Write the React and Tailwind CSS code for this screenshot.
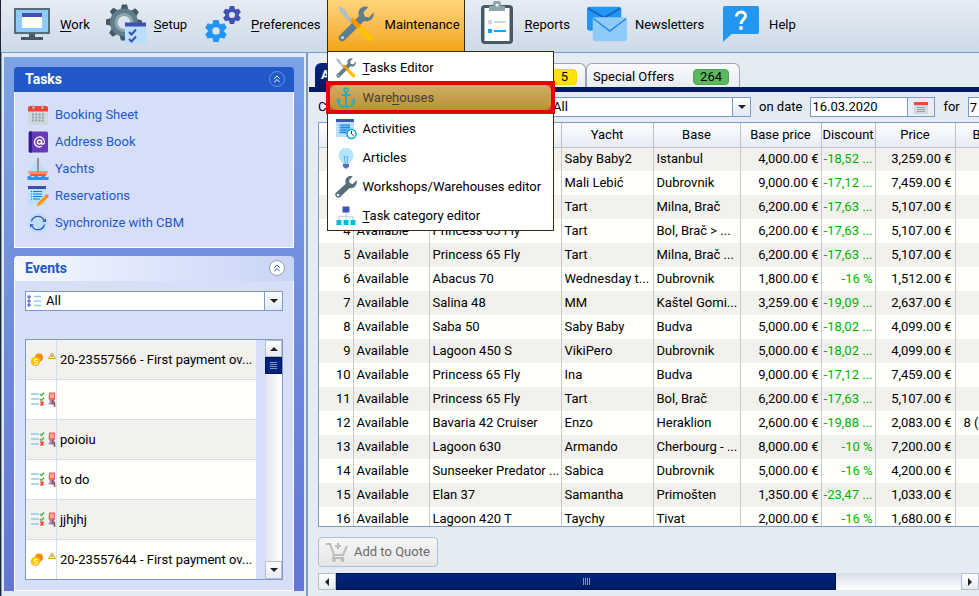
import { useState } from "react";
import { ChevronsUp } from "lucide-react";

const tasks = [
  { label: "Booking Sheet", icon: CalendarIcon },
  { label: "Address Book", icon: AddressBookIcon },
  { label: "Yachts", icon: BoatIcon },
  { label: "Reservations", icon: ReservationIcon },
  { label: "Synchronize with CBM", icon: SyncIcon },
];

const events = [
  { type: "payment", text: "20-23557566 - First payment ov..." },
  { type: "todo", text: "" },
  { type: "todo", text: "poioiu" },
  { type: "todo", text: "to do" },
  { type: "todo", text: "jjhjhj" },
  { type: "payment", text: "20-23557644 - First payment ov..." },
];

const offers = [
  ["", "Saby Baby2", "Istanbul", "4,000.00 €", "-18,52 ...", "3,259.00 €"],
  ["", "Mali Lebić", "Dubrovnik", "9,000.00 €", "-17,12 ...", "7,459.00 €"],
  ["", "Tart", "Milna, Brač", "6,200.00 €", "-17,63 ...", "5,107.00 €"],
  ["Princess 65 Fly", "Tart", "Bol, Brač > ...", "6,200.00 €", "-17,63 ...", "5,107.00 €"],
  ["Princess 65 Fly", "Tart", "Milna, Brač ...", "6,200.00 €", "-17,63 ...", "5,107.00 €"],
  ["Abacus 70", "Wednesday t...", "Dubrovnik", "1,800.00 €", "-16 %", "1,512.00 €"],
  ["Salina 48", "MM", "Kaštel Gomi...", "3,259.00 €", "-19,09 ...", "2,637.00 €"],
  ["Saba 50", "Saby Baby", "Budva", "5,000.00 €", "-18,02 ...", "4,099.00 €"],
  ["Lagoon 450 S", "VikiPero", "Dubrovnik", "5,000.00 €", "-18,02 ...", "4,099.00 €"],
  ["Princess 65 Fly", "Ina", "Budva", "9,000.00 €", "-17,12 ...", "7,459.00 €"],
  ["Princess 65 Fly", "Tart", "Bol, Brač", "6,200.00 €", "-17,63 ...", "5,107.00 €"],
  ["Bavaria 42 Cruiser", "Enzo", "Heraklion", "2,600.00 €", "-19,88 ...", "2,083.00 €", "8 ("],
  ["Lagoon 630", "Armando", "Cherbourg - ...", "8,000.00 €", "-10 %", "7,200.00 €"],
  ["Sunseeker Predator ...", "Sabica", "Dubrovnik", "5,000.00 €", "-16 %", "4,200.00 €"],
  ["Elan 37", "Samantha", "Primošten", "1,350.00 €", "-23,47 ...", "1,033.00 €"],
  ["Lagoon 420 T", "Taychy", "Tivat", "2,000.00 €", "-16 %", "1,680.00 €"],
];

function WorkIcon() {
  return (
    <svg viewBox="0 0 40 36" className="h-9 w-10">
      <path d="M2 2h36v26H2z" fill="#546e7a" />
      <path d="M4 4h32v22H4z" fill="#90caf9" />
      <path d="M17 28h6v4h-6zM9 31h22v3H9z" fill="#455a64" />
      <path d="M10 7h20v15H10z" fill="#fff" />
      <path d="M10 7h20v4H10z" fill="#3f51b5" />
    </svg>
  );
}

function SetupIcon() {
  return (
    <svg viewBox="0 0 40 40" className="size-10">
      <g fill="#455a64">
        {[0, 45, 90, 135, 180, 225, 270, 315].map((deg) => (
          <path key={deg} d="M14.500 6 16 0.500h5L22.500 6z" transform={`rotate(${deg} 18 18.500)`} />
        ))}
      </g>
      <circle cx="18" cy="18.500" r="10.500" fill="none" stroke="#607d8b" strokeWidth="7" />
      <circle cx="18" cy="18.500" r="8" fill="none" stroke="#90a4ae" strokeWidth="3" />
      <path d="M19 19h21v21H19z" fill="#bbdefb" />
      <path d="M19 18.500h21v4H19z" fill="#3f51b5" />
      <path d="m23 28 2.500 2.500 4.500-5M23 35l2.500 2.500 4.500-5" fill="none" stroke="#3f51b5" strokeWidth="2" />
    </svg>
  );
}

function SmallGear({ cx, cy, r, color }) {
  return (
    <g transform={`translate(${cx} ${cy}) scale(${r / 11})`}>
      {[0, 60, 120, 180, 240, 300].map((deg) => (
        <path key={deg} d="M-3.800-6-2.600-11h5.200L3.800-6z" fill={color} transform={`rotate(${deg})`} />
      ))}
      <circle r="6" fill="none" stroke={color} strokeWidth="4.500" />
    </g>
  );
}

function PreferencesIcon() {
  return (
    <svg viewBox="0 0 40 40" className="size-10">
      <SmallGear cx={29} cy={11} r={9} color="#3f51b5" />
      <SmallGear cx={13} cy={27} r={11} color="#2196f3" />
    </svg>
  );
}

function ToolsIcon({ className }) {
  return (
    <svg viewBox="0 0 36 36" className={className}>
      <path d="m0.500 1.500 1-1 5 2.500 2.500 5L20 19l-3 3L6 10 2.500 7z" fill="#b0bec5" />
      <path d="m17 21.500 4-4L34 29.500c3 3-1.500 7.500-4.500 4.500z" fill="#ffc107" />
      <path
        d="M35.500 6.500 31 11.500l-4.500-1-1-4.500L30.500 1c-4-1.500-8.500 0-9.700 4-.7 2-.3 3.500.2 5L1.500 29.500c-3 3 2 8 5 5L26 15c5 2 11-2.500 9.500-8.500z"
        fill="#607d8b"
      />
      <path d="m12 14.500 3-3 8 8-3.500 3.500z" fill="#ff9800" />
      <circle cx="4.500" cy="31.500" r="1.500" fill="#cfd8dc" />
    </svg>
  );
}

function ReportsIcon() {
  return (
    <svg viewBox="0 0 40 46" className="h-[46px] w-10">
      <path d="M8 4h24a4 4 0 0 1 4 4v31a4 4 0 0 1-4 4H8a4 4 0 0 1-4-4V8a4 4 0 0 1 4-4z" fill="#455a64" />
      <path d="M7.500 7h25v33h-25z" fill="#fff" />
      <path d="M12 5h4.500a4 4 0 1 1 7 0H28v5H12z" fill="#90a4ae" />
      <circle cx="20" cy="4" r="1.500" fill="#fff" />
      <path d="M11 19h4v4h-4zM17 20h12v2H17z" fill="#cfd8dc" />
      <path d="M11 28h4v4h-4zM17 29h12v2H17z" fill="#03a9f4" />
    </svg>
  );
}

function NewslettersIcon() {
  return (
    <svg viewBox="0 0 42 36" className="h-9 w-[42px]">
      <rect width="36" height="25" rx="2.500" fill="#2196f3" />
      <path d="m1 1.500 17 10 17-10" fill="none" stroke="#1565c0" strokeWidth="2" />
      <rect x="6" y="11" width="36" height="25" rx="2.500" fill="#90caf9" />
      <path d="m7 12.500 17 13 17-13" fill="none" stroke="#1e88e5" strokeWidth="1.500" />
    </svg>
  );
}

function HelpIcon() {
  return (
    <svg viewBox="0 0 40 38" className="h-[38px] w-10">
      <path d="M4 1h32a2 2 0 0 1 2 2v24a2 2 0 0 1-2 2H10.500L2 37V3a2 2 0 0 1 2-2z" fill="#2196f3" />
      <path d="M15.500 11.500c0-6 9-6 9-.7 0 3.700-4.500 4-4.500 8.200" fill="none" stroke="#fff" strokeWidth="3" />
      <circle cx="20" cy="23" r="2" fill="#fff" />
    </svg>
  );
}

function AnchorIcon() {
  return (
    <svg viewBox="0 0 20 22" className="h-[22px] w-5" fill="none" stroke="#2fa9bd" strokeWidth="2">
      <circle cx="10" cy="3" r="2" strokeWidth="1.500" />
      <path d="M10 5v15M5.500 8h9" />
      <path d="M2 13c0 5 4 7 8 7s8-2 8-7" />
      <path d="m0 15 2-4 3.500 3zM20 15l-2-4-3.500 3z" fill="#2fa9bd" stroke="none" />
    </svg>
  );
}

function ActivitiesIcon() {
  return (
    <svg viewBox="0 0 22 22" className="size-[22px]">
      <path d="M1 2h18v17H1z" fill="#bbdefb" />
      <path d="M1 1h18v3H1z" fill="#3f51b5" />
      <path d="M5 6.500h10v9H5z" fill="#64b5f6" />
      <path d="M4 7h1M4 9.500h1M4 12h1M4 14.500h1M6 7h9M6 9.500h9M6 12h6M6 14.500h5" stroke="#1e88e5" />
      <circle cx="16.500" cy="16" r="4.500" fill="#fff" stroke="#00acc1" strokeWidth="1.500" />
      <path d="M16.500 13v3l2 1.500" fill="none" stroke="#263238" />
    </svg>
  );
}

function BulbIcon() {
  return (
    <svg viewBox="0 0 22 22" className="size-[22px]">
      <path d="M11 1a7.500 7.500 0 0 1 5 13c-1 1-1.200 2-1.500 3h-7c-.3-1-.5-2-1.500-3a7.500 7.500 0 0 1 5-13z" fill="#b3e5fc" />
      <path d="m10 17-.8-8 1.800 1.500L12.800 9l-.8 8" fill="none" stroke="#4fa3e0" strokeWidth="0.800" />
      <path d="M8 17h6v2.500l-2 2h-2l-2-2z" fill="#5c6bc0" />
    </svg>
  );
}

function WrenchIcon() {
  return (
    <svg viewBox="0 0 36 36" className="size-[22px]">
      <path
        d="M35.500 7 29 13l-5-1.500L23 7l6-6.500c-6-1.500-12 2-12 8 0 1.500.2 2.500.6 4L1.500 27.500c-4 4 3 11 7 7L24 19.500c7 2 13-5 11.500-12.500z"
        fill="#546e7a"
      />
      <circle cx="5" cy="31" r="2" fill="#fff" />
    </svg>
  );
}

function TreeIcon() {
  return (
    <svg viewBox="0 0 22 22" className="size-[22px]">
      <path d="M11 7v9M4 16v-4.500h14V16" fill="none" stroke="#cfd8dc" strokeWidth="1.500" />
      <path d="M7.500 1.500h7v6h-7z" fill="#3f51b5" />
      <path d="M1.500 15h5v5h-5zM8.500 15h5v5h-5zM15.500 15h5v5h-5z" fill="#00bcd4" />
    </svg>
  );
}

function CalendarIcon() {
  return (
    <svg viewBox="0 0 22 22" className="size-[22px]">
      <path d="M1 7h20v12a2 2 0 0 1-2 2H3a2 2 0 0 1-2-2z" fill="#cfd8dc" />
      <path d="M1 7.500V4a2 2 0 0 1 2-2h16a2 2 0 0 1 2 2v3.500z" fill="#f44336" />
      <path d="M6.500 1v4M15.500 1v4" stroke="#b0bec5" strokeWidth="2" />
      <path d="M5 10.500h12M5 13.500h12M5 16.500h12" stroke="#90a4ae" strokeWidth="2" strokeDasharray="2 1.300" />
    </svg>
  );
}

function AddressBookIcon() {
  return (
    <svg viewBox="0 0 22 22" className="size-[22px]">
      <rect x="1.500" y="0.500" width="19.500" height="21" rx="1.500" fill="#673ab7" />
      <path d="M2 .5h3v21H2z" fill="#311b92" />
      <circle cx="12.500" cy="11" r="2" fill="none" stroke="#fff" strokeWidth="1.500" />
      <path d="M14.500 9v3c0 2 3 1.500 3-1a5 5 0 1 0-2.500 4.300" fill="none" stroke="#fff" strokeWidth="1.300" />
    </svg>
  );
}

function BoatIcon() {
  return (
    <svg viewBox="0 0 22 22" className="size-[22px]">
      <path d="M10 1 2 13h8zM12 2l7 11h-7z" fill="#bbdefb" />
      <path d="M10.300 0h1.400v14h-1.400z" fill="#8d6e63" />
      <path d="M1 13.500h20L18.500 18h-15z" fill="#ff5722" />
      <path d="M2 15h18" stroke="#ffccbc" />
      <path d="M.5 18.500q1.750-1.500 3.500 0t3.500 0 3.500 0 3.500 0 3.500 0 3.500 0V22H.5z" fill="#2196f3" />
    </svg>
  );
}

function ReservationIcon() {
  return (
    <svg viewBox="0 0 22 22" className="size-[22px]">
      <path d="M1 1h18v19H1z" fill="#bbdefb" />
      <path d="M1 1h18v3H1z" fill="#3f51b5" />
      <path d="M4 6.500h1M4 9h1M4 11.500h1M4 14h1M6 6.500h9M6 9h9M6 11.500h9M6 14h7" stroke="#1976d2" strokeWidth="1.200" />
      <path d="m9.500 21.500 1.500-4 7-7 2.500 2.500-7 7z" fill="#ff9800" />
      <path d="m18 10.500 1-1c1-1 3.500 1.500 2.500 2.500l-1 1z" fill="#e57373" />
    </svg>
  );
}

function SyncIcon() {
  return (
    <svg viewBox="0 0 22 22" className="size-[22px]">
      <circle cx="11" cy="11" r="10" fill="#bbdefb" />
      <path d="M4.500 9.500a6.700 6.700 0 0 1 12.500-1.500M17.500 12.500A6.700 6.700 0 0 1 5 14" fill="none" stroke="#3f51b5" strokeWidth="1.200" />
      <path d="m15 9.500 4 .5V6.500zM7 12.500 3 12v3.500z" fill="#3f51b5" />
    </svg>
  );
}

function CoinsIcon() {
  return (
    <svg viewBox="0 0 26 16" className="h-4 w-[26px] shrink-0">
      <circle cx="9" cy="5.500" r="4" fill="#fb8c00" />
      <circle cx="5.500" cy="9.500" r="4.700" fill="#ffc107" />
      <path d="M7.500 7.500H4.500v2h2c1.300 0 1.300 2.300 0 2.300H4" fill="none" stroke="#fff" />
      <path d="m22 1 3.500 5.500h-7z" fill="#fff59d" stroke="#d9a520" />
      <path d="M22 3v2" stroke="#8d6e63" />
    </svg>
  );
}

function TodoIcon() {
  return (
    <svg viewBox="0 0 26 16" className="h-4 w-[26px] shrink-0" fill="none">
      <path d="M1 2h8M1 7h8M1 12h8" stroke="#90caf9" strokeWidth="1.500" />
      <path d="m10 2 1.500 1.500L14 .5M10 7l1.500 1.500L14 5.500" stroke="#4caf50" strokeWidth="1.400" />
      <path d="m10.500 9.500 3 4M13.500 9.500l-3 4" stroke="#f44336" strokeWidth="1.400" />
      <path d="M19 .5h6v7l-2 2h-3l-1.500-3z" fill="#ef6c5a" />
      <path d="M21 2v4M23 2v4" stroke="#fff" strokeWidth="0.800" />
      <path d="m18 12 3-4 4 1v3l-3 1z" fill="#b388eb" />
      <path d="M22.500 8v3h2v4" stroke="#8d5a3a" strokeWidth="1.500" />
    </svg>
  );
}

function CartIcon() {
  return (
    <svg viewBox="0 0 22 20" className="h-5 w-[22px]" fill="none" stroke="#bdbdbd" strokeWidth="2">
      <path d="M0 2h4l4 11h9l4-9M8 13l-1 3h11M12 1v6M9 4h6" />
      <circle cx="8" cy="18" r="1" />
      <circle cx="16.500" cy="18" r="1" />
    </svg>
  );
}

function ListIcon() {
  return (
    <svg viewBox="0 0 14 12" className="h-3 w-3.5">
      <path d="M1 1h2v2H1zM1 5h2v2H1zM1 9h2v2H1z" fill="#fff" stroke="#3f51b5" />
      <path d="M7 1.500h7M7 6h7M7 10.500h7" stroke="#90caf9" strokeWidth="1.500" />
    </svg>
  );
}

function Arrow({ dir = "down" }) {
  const paths = { down: "M1 3h8L5 7z", up: "M1 7h8L5 3z", left: "M7 1v8L3 5z", right: "M3 1v8l4-4z" };
  return (
    <svg viewBox="0 0 10 10" className="size-2.5">
      <path d={paths[dir]} fill="#222" />
    </svg>
  );
}

function Mnemonic({ text, at = 0 }) {
  return (
    <span className="whitespace-nowrap">
      {text.slice(0, at)}
      <span className="underline underline-offset-2">{text[at]}</span>
      {text.slice(at + 1)}
    </span>
  );
}

function ToolbarButton({ icon, children }) {
  return (
    <button type="button" className="flex h-full items-center gap-2 px-2">
      <span className="flex w-10 shrink-0 justify-center">{icon}</span>
      <span className="pt-0.5">{children}</span>
    </button>
  );
}

function ComboBox({ label, icon, className, children }) {
  return (
    <div className={`relative h-5 border border-[#7a9bcb] bg-white ${className}`}>
      {icon && <span className="pointer-events-none absolute inset-y-0 left-px flex items-center">{icon}</span>}
      <select aria-label={label} className={`block h-full w-full appearance-none bg-transparent pr-5 outline-none ${icon ? "pl-5" : "pl-[3px]"}`}>
        {children}
      </select>
      <span className="pointer-events-none absolute inset-y-0 right-0 flex w-[18px] items-center justify-center border-l border-[#7a9bcb] bg-linear-to-b from-white to-[#e1e8f4]">
        <Arrow />
      </span>
    </div>
  );
}

function MenuItem({ icon, children }) {
  return (
    <button type="button" role="menuitem" className="flex h-[29px] w-full items-center gap-1 pl-[7px] text-left whitespace-nowrap">
      <span className="flex w-[22px] shrink-0 justify-center">{icon}</span>
      <span className="pl-0.5">{children}</span>
    </button>
  );
}

function MaintenanceMenu() {
  return (
    <div role="menu" className="absolute top-[51px] left-0 z-20 w-[227px] border border-[#3b2b0a] bg-white pt-px">
      <MenuItem icon={<ToolsIcon className="size-5" />}>
        <Mnemonic text="Tasks Editor" />
      </MenuItem>
      <div className="-mx-0.5 -mt-px border-4 border-[#e60008] bg-[#c04a4a]">
        <button
          type="button"
          role="menuitem"
          className="flex h-[25px] w-full items-center gap-1 rounded-md bg-linear-to-b from-[#cdaf68] to-[#c0902b] pl-[5px] text-left text-[#45402f]"
        >
          <span className="flex w-[22px] shrink-0 justify-center"><AnchorIcon /></span>
          <span className="pl-0.5"><Mnemonic text="Warehouses" at={4} /></span>
        </button>
      </div>
      <MenuItem icon={<ActivitiesIcon />}>Activities</MenuItem>
      <MenuItem icon={<BulbIcon />}>Articles</MenuItem>
      <MenuItem icon={<WrenchIcon />}>Workshops/Warehouses editor</MenuItem>
      <MenuItem icon={<TreeIcon />}>
        <Mnemonic text="Task category editor" />
      </MenuItem>
    </div>
  );
}

function Toolbar() {
  const [open, setOpen] = useState(true);

  return (
    <nav className="flex h-[53px] shrink-0 border-b border-[#7a9bcb] bg-linear-to-b from-[#e6ecf4] to-[#cddae8] pb-1 pl-[3px]">
      <ToolbarButton icon={<WorkIcon />}><Mnemonic text="Work" /></ToolbarButton>
      <ToolbarButton icon={<SetupIcon />}><Mnemonic text="Setup" /></ToolbarButton>
      <ToolbarButton icon={<PreferencesIcon />}><Mnemonic text="Preferences" /></ToolbarButton>
      <div className="relative -ml-0.5">
        <button
          type="button"
          aria-expanded={open}
          onClick={() => setOpen(!open)}
          className="flex h-[52px] items-center gap-2 border-x border-[#3b2b0a] bg-linear-to-b from-[#ffd478] to-[#f2a500] pr-1 pb-1 pl-2"
        >
          <span className="flex w-10 shrink-0 justify-center"><ToolsIcon className="size-9" /></span>
          <span className="pt-0.5 pl-px">Maintenance</span>
        </button>
        {open && <MaintenanceMenu />}
      </div>
      <div className="flex gap-px pl-1">
        <ToolbarButton icon={<ReportsIcon />}><Mnemonic text="Reports" /></ToolbarButton>
        <ToolbarButton icon={<NewslettersIcon />}>Newsletters</ToolbarButton>
        <ToolbarButton icon={<HelpIcon />}>Help</ToolbarButton>
      </div>
    </nav>
  );
}

function TasksPanel() {
  return (
    <section>
      <header className="flex h-[25px] items-center justify-between rounded-t bg-[#2159c9] pr-[9px] pb-0.5 pl-[11px] text-white">
        <h2 className="text-sm font-bold">Tasks</h2>
        <button type="button" aria-label="Collapse tasks" className="flex size-4 items-center justify-center rounded-full border border-[#5b94f0]">
          <ChevronsUp size={12} />
        </button>
      </header>
      <ul className="border border-t-0 border-white bg-[#d7dff8] px-3 pt-[9px] pb-[11px]">
        {tasks.map(({ label, icon: Icon }) => (
          <li key={label}>
            <a href="#" className="flex h-[27px] items-center gap-1.5 text-[#2159c9]">
              <Icon />
              {label}
            </a>
          </li>
        ))}
      </ul>
    </section>
  );
}

function EventsPanel() {
  return (
    <section className="mt-2 flex min-h-0 flex-1 flex-col">
      <header className="flex h-[25px] shrink-0 items-center justify-between rounded-t bg-linear-to-r from-[#f5f8fe] to-[#c8d4f7] pr-[9px] pb-0.5 pl-[11px]">
        <h2 className="text-sm font-bold text-[#2159c9]">Events</h2>
        <button type="button" aria-label="Collapse events" className="flex size-4 items-center justify-center rounded-full border border-[#9a9fb0] bg-white text-[#2159c9]">
          <ChevronsUp size={12} />
        </button>
      </header>
      <div className="flex min-h-0 flex-1 flex-col gap-7 border border-t-0 border-white bg-[#d7dff8] px-2.5 pt-2.5 pb-2.5">
        <ComboBox label="Event type" icon={<ListIcon />} className="shrink-0">
          <option>All</option>
        </ComboBox>
        <div className="flex min-h-0 flex-1 border border-[#7a9bcb]">
          <ul className="mr-[9px] min-w-0 flex-1 overflow-hidden">
            {events.map((event, i) => (
              <li key={i} className="flex h-10 border-b border-[#d3ddf6] odd:bg-[#f3f1ee] even:bg-[#fffffb]">
                <span className="flex w-[31px] shrink-0 items-center overflow-hidden border-r border-[#d3ddf6] pl-1">
                  {event.type === "payment" ? <CoinsIcon /> : <TodoIcon />}
                </span>
                <span className="flex items-center pl-[3px] whitespace-nowrap">{event.text}</span>
              </li>
            ))}
          </ul>
          <div className="flex w-[17px] shrink-0 flex-col bg-linear-to-r from-[#dfe4ee] to-white">
            <button type="button" aria-label="Scroll up" className="flex h-[17px] items-center justify-center border border-[#b8bfcc] bg-linear-to-b from-white to-[#e6ebf3]">
              <Arrow dir="up" />
            </button>
            <div className="flex h-[17px] flex-col items-center justify-center gap-px border border-[#001450] bg-[#00247d]">
              {[0, 1, 2, 3].map((n) => <i key={n} className="h-px w-[7px] bg-[#8093c4]" />)}
            </div>
            <button type="button" aria-label="Scroll down" className="mt-auto flex h-[18px] items-center justify-center border border-[#b8bfcc] bg-linear-to-b from-white to-[#e6ebf3]">
              <Arrow />
            </button>
          </div>
        </div>
      </div>
    </section>
  );
}

function Tabs() {
  return (
    <div className="ml-px flex h-[29px] shrink-0 border-b-[5px] border-[#001b62] pl-1.5">
      <button type="button" className="w-[120px] rounded-t-md bg-linear-to-b from-[#00267f] to-[#001b62] px-1.5 text-left font-bold text-white">
        Availability
      </button>
      <button type="button" className="flex w-[151px] items-center justify-between rounded-t-md border border-b-0 border-[#9fa3ab] bg-linear-to-b from-[#fafafc] to-[#e8ecf3] pt-0.5 pr-2 pl-1.5">
        Options
        <span className="rounded border border-[#f0d800] bg-[#ffe208] px-2 leading-3.5">5</span>
      </button>
      <button type="button" className="flex w-[154px] items-center justify-between rounded-t-md border border-b-0 border-[#9fa3ab] bg-linear-to-b from-[#fafafc] to-[#e8ecf3] pt-0.5 pr-2.5 pl-1.5">
        Special Offers
        <span className="rounded border border-[#4aa84e] bg-[#5cb85c] px-1.5 leading-3.5">264</span>
      </button>
    </div>
  );
}

function Filters() {
  return (
    <form className="flex h-5 shrink-0 items-center gap-2 overflow-hidden pl-2.5 whitespace-nowrap">
      <span className="w-[223px] shrink-0">Country</span>
      <ComboBox label="Country" className="w-[202px] shrink-0">
        <option>All</option>
      </ComboBox>
      <label htmlFor="on-date">on date</label>
      <div className="flex h-5 w-[125px] shrink-0 border border-[#7a9bcb] bg-white">
        <input id="on-date" type="text" defaultValue="16.03.2020" className="min-w-0 flex-1 px-px outline-none" />
        <button type="button" aria-label="Pick date" className="flex w-[27px] items-center justify-center border-l border-[#7a9bcb] bg-[#e9eef6]">
          <svg viewBox="0 0 14 13" className="h-[13px] w-3.5">
            <path d="M0 1h14v3H0z" fill="#f44336" />
            <path d="M0 4h14v9H0z" fill="#cfd8dc" />
            <path d="M3 6.500h8M3 8.500h8M3 10.500h8" stroke="#90a4ae" />
            <path d="M3.500 0v2M10.500 0v2" stroke="#b0bec5" />
          </svg>
        </button>
      </div>
      <label htmlFor="days">for</label>
      <input id="days" type="text" defaultValue="7" className="h-5 w-10 shrink-0 border border-[#7a9bcb] bg-white px-px outline-none" />
    </form>
  );
}

function OffersTable() {
  return (
    <div className="ml-2.5 min-h-0 flex-1 overflow-hidden border border-r-0 border-[#7a9bcb] bg-[#fffffb]">
      <table className="w-[711px] table-fixed border-collapse whitespace-nowrap">
        <colgroup>
          <col className="w-[34px]" />
          <col className="w-[76px]" />
          <col className="w-[132px]" />
          <col className="w-[92px]" />
          <col className="w-[87px]" />
          <col className="w-[81px]" />
          <col className="w-[54px]" />
          <col className="w-[80px]" />
          <col className="w-[75px]" />
        </colgroup>
        <thead>
          <tr className="h-6 bg-linear-to-b from-white to-[#e6ebf4] *:border-r *:border-b *:border-[#bfc2c8] *:p-0 *:font-normal">
            <th aria-label="Number" />
            <th aria-label="Status" />
            <th aria-label="Model" />
            <th>Yacht</th>
            <th>Base</th>
            <th>Base price</th>
            <th>Discount</th>
            <th>Price</th>
            <th className="text-left"><span className="pl-[17px]">B</span></th>
          </tr>
        </thead>
        <tbody>
          {offers.map(([model, yacht, base, basePrice, discount, price, berths], i) => (
            <tr key={i} className="h-6 odd:bg-[#f3f1ee] even:bg-[#fffffb] *:border-r *:border-[#c9c9c9] *:py-0">
              <td className="pr-0.5 text-right">{i + 1}</td>
              <td className="pl-[3px]">Available</td>
              <td className="pl-[3px]">{model}</td>
              <td className="pl-[3px]">{yacht}</td>
              <td className="pl-[3px]">{base}</td>
              <td className="pr-0.5 text-right">{basePrice}</td>
              <td className="pr-0.5 text-right text-[#00b400]">{discount}</td>
              <td className="pr-[3px] text-right">{price}</td>
              <td className="pl-2">{berths}</td>
            </tr>
          ))}
        </tbody>
      </table>
    </div>
  );
}

function HorizontalScroll() {
  return (
    <div className="mt-1.5 ml-2.5 flex h-[17px] shrink-0 bg-linear-to-b from-[#d9dee8] to-white">
      <button type="button" aria-label="Scroll left" className="flex w-[18px] items-center justify-center border border-[#b8bfcc] bg-linear-to-b from-white to-[#e6ebf3]">
        <Arrow dir="left" />
      </button>
      <div className="flex-1">
        <div className="flex h-full w-4/5 items-center justify-center gap-px border border-[#001450] bg-linear-to-b from-[#00267f] to-[#001b62]">
          {[0, 1, 2, 3].map((n) => <i key={n} className="h-[7px] w-px bg-[#8093c4]" />)}
        </div>
      </div>
      <button type="button" aria-label="Scroll right" className="flex w-[18px] items-center justify-center border border-[#b8bfcc] bg-linear-to-b from-white to-[#e6ebf3]">
        <Arrow dir="right" />
      </button>
    </div>
  );
}

export default function App() {
  return (
    <div className="flex h-screen flex-col overflow-hidden border-l border-[#20242c] bg-[#e4ebf3] font-[Roboto,sans-serif] text-[13px] leading-4 text-black">
      <Toolbar />
      <div className="flex min-h-0 flex-1">
        <aside className="flex w-[307px] shrink-0 flex-col border-r-2 border-l border-[#7a9bcb] px-0.5 pt-1 pb-[5px]">
          <div className="flex min-h-0 flex-1 flex-col bg-linear-to-b from-[#7ba2e7] to-[#6375d6] px-2.5 pt-2.5">
            <TasksPanel />
            <EventsPanel />
          </div>
        </aside>
        <main className="flex min-w-0 flex-1 flex-col pt-2.5 pb-1.5">
          <Tabs />
          <div className="flex shrink-0 flex-col py-[5px]">
            <Filters />
          </div>
          <OffersTable />
          <div className="mt-2.5 ml-2.5 flex shrink-0">
            <button type="button" disabled className="flex h-[30px] items-center gap-1.5 rounded border border-[#a9bfdd] bg-linear-to-b from-[#f6f6f6] to-[#e6e6e6] px-[7px] text-[#6a6a6a]">
              <CartIcon />
              Add to Quote
            </button>
          </div>
          <HorizontalScroll />
        </main>
      </div>
    </div>
  );
}
